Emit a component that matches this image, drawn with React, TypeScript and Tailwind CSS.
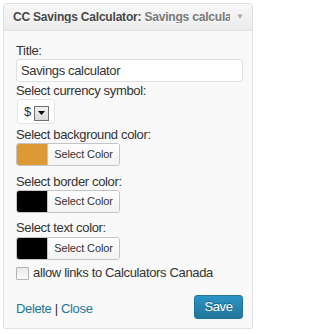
import React from 'react';

const ColorPicker: React.FC<{ color: string }> = ({ color }) => (
  <div className="flex h-[23px] w-[104px] overflow-hidden rounded-[3px] border border-[#c4c4c4]">
    <span className="w-[31px] border-r border-[#c4c4c4]" style={{ backgroundColor: color }} />
    <span className="flex flex-1 items-center justify-center bg-gradient-to-b from-[#fefefe] to-[#f3f3f3] text-[11px] tracking-[-0.1px] text-[#333]">
      Select Color
    </span>
  </div>
);

const Label: React.FC<{ children: React.ReactNode; className?: string }> = ({ children, className }) => (
  <label className={`block h-[16px] text-[13px] leading-[16px] tracking-[-0.35px] text-[#333] ${className ?? ''}`}>
    {children}
  </label>
);

const App: React.FC = () => {
  return (
    <div className="h-[334px] w-[258px] bg-white p-[3px] font-['Liberation_Sans',Arial,sans-serif]">
      <div className="w-[250px] rounded-[3px] border border-[#dfdfdf] bg-[#f9f9f9]">
        {/* widget title bar */}
        <div className="flex h-[27px] items-center border-b border-[#dfdfdf] bg-gradient-to-b from-[#f7f7f7] to-[#ececec] pl-[9px] pr-[8px]">
          <h4 className="flex-1 overflow-hidden whitespace-nowrap text-[12px] font-bold leading-[12px] tracking-[-0.2px] text-[#464646] [text-shadow:0_1px_0_#fff]">
            CC Savings Calculator: <span className="text-[#777]">Savings calculator</span>
          </h4>
          <span className="ml-[6px] text-[8px] leading-none text-[#aaa]">▼</span>
        </div>

        {/* widget body */}
        <div className="pb-[9px] pl-[12px] pr-[9px] pt-[12px]">
          <Label>Title:</Label>
          <input
            className="block h-[23px] w-full rounded-[3px] border border-[#dfdfdf] bg-white pl-[4px] text-[13px] tracking-[-0.35px] text-[#333] outline-none"
            defaultValue="Savings calculator"
          />

          <Label className="mt-[1px]">Select currency symbol:</Label>
          <div className="ml-[1px] flex h-[25px] w-[38px] items-center rounded-[3px] border border-[#e3e3e3] bg-white pl-[6px]">
            <span className="text-[13px] leading-none text-[#333]">$</span>
            <span className="ml-[3px] mt-[3px] flex h-[15px] w-[15px] items-center justify-center border border-[#707070] bg-gradient-to-b from-[#f2f2f2] to-[#d8d8d8]">
              <svg width="7" height="4" viewBox="0 0 7 4">
                <path d="M0 0h7L3.5 4z" fill="#000" />
              </svg>
            </span>
          </div>

          <Label className="mt-[3px]">Select background color:</Label>
          <ColorPicker color="#dd9933" />

          <Label className="mt-[8px]">Select border color:</Label>
          <ColorPicker color="#000000" />

          <Label className="mt-[7px]">Select text color:</Label>
          <div className="mt-[1px]">
            <ColorPicker color="#000000" />
          </div>

          <div className="mt-[5px] flex h-[16px] items-center gap-[4px]">
            <span className="h-[13px] w-[13px] rounded-[1px] border border-[#b4b4b4] bg-gradient-to-b from-[#e8e8e8] to-[#fafafa]" />
            <span className="text-[13px] leading-[16px] tracking-[-0.35px] text-[#333]">
              allow links to Calculators Canada
            </span>
          </div>

          <div className="mt-[14px] flex items-center justify-between">
            <div className="pt-[3px] text-[13px] leading-[16px] tracking-[-0.35px] text-[#333]">
              <a className="text-[#21759b]">Delete</a> | <a className="text-[#21759b]">Close</a>
            </div>
            <button className="h-[24px] w-[49px] rounded-[3px] border border-[#21759b] bg-gradient-to-b from-[#2a95c5] to-[#21759b] text-[13px] tracking-[-0.4px] text-white [text-shadow:0_-1px_0_rgba(0,0,0,0.3)]">
              Save
            </button>
          </div>
        </div>
      </div>
    </div>
  );
};

export default App;
